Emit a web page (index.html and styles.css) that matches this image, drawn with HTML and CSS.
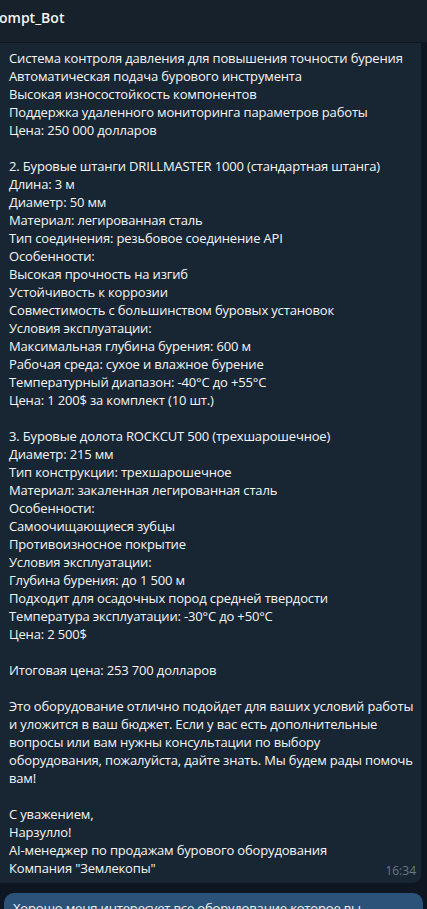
FILE: index.html
```html
<!DOCTYPE html>
<html lang="ru">
<head>
<meta charset="utf-8">
<link rel="stylesheet" href="styles.css">
</head>
<body>
<div class="app">
  <header class="topbar">
    <div class="title">ompt_Bot</div>
  </header>
  <main class="chat">
    <div class="bubble incoming">
      <div class="text">Система контроля давления для повышения точности бурения
Автоматическая подача бурового инструмента
Высокая износостойкость компонентов
Поддержка удаленного мониторинга параметров работы
Цена: 250 000 долларов

2. Буровые штанги DRILLMASTER 1000 (стандартная штанга)
Длина: 3 м
Диаметр: 50 мм
Материал: легированная сталь
Тип соединения: резьбовое соединение API
Особенности:
Высокая прочность на изгиб
Устойчивость к коррозии
Совместимость с большинством буровых установок
Условия эксплуатации:
Максимальная глубина бурения: 600 м
Рабочая среда: сухое и влажное бурение
Температурный диапазон: -40°C до +55°C
Цена: 1 200$ за комплект (10 шт.)

3. Буровые долота ROCKCUT 500 (трехшарошечное)
Диаметр: 215 мм
Тип конструкции: трехшарошечное
Материал: закаленная легированная сталь
Особенности:
Самоочищающиеся зубцы
Противоизносное покрытие
Условия эксплуатации:
Глубина бурения: до 1 500 м
Подходит для осадочных пород средней твердости
Температура эксплуатации: -30°C до +50°C
Цена: 2 500$

Итоговая цена: 253 700 долларов

Это оборудование отлично подойдет для ваших условий работы
и уложится в ваш бюджет. Если у вас есть дополнительные
вопросы или вам нужны консультации по выбору
оборудования, пожалуйста, дайте знать. Мы будем рады помочь
вам!

С уважением,
Нарзулло!
AI-менеджер по продажам бурового оборудования
Компания "Землекопы"</div>
      <span class="time">16:34</span>
    </div>
    <div class="bubble outgoing">
      <div class="text">Хорошо меня интересует все оборудование которое вы</div>
    </div>
  </main>
</div>
</body>
</html>
```

FILE: styles.css
```css
html, body {
  margin: 0;
  padding: 0;
  background: #0e1621;
}
body {
  width: 427px;
  height: 909px;
  overflow: hidden;
  font-family: "Open Sans", "Noto Sans", sans-serif;
  color: #f5f5f5;
}
.app {
  display: flex;
  flex-direction: column;
  height: 909px;
}
.topbar {
  height: 42px;
  flex: none;
  background: #17212b;
  border-bottom: 1px solid #0f1822;
  box-sizing: content-box;
}
.title {
  font-size: 14px;
  font-weight: 600;
  line-height: 18px;
  padding-top: 9px;
  margin-left: -1px;
  color: #f5f5f5;
}
.chat {
  flex: 1;
  display: flex;
  flex-direction: column;
  gap: 10px;
  overflow: hidden;
}
.bubble {
  position: relative;
  flex: none;
}
.incoming {
  width: 421px;
  background: #182533;
  border-radius: 0 0 8px 0;
  padding: 6px 0 6px 9px;
  box-sizing: border-box;
}
.text {
  white-space: pre;
  font-size: 13px;
  line-height: 18px;
  letter-spacing: -0.16px;
}
.time {
  position: absolute;
  right: 5px;
  bottom: 3px;
  font-size: 12px;
  line-height: 18px;
  color: #6c7883;
}
.outgoing {
  margin-left: 4px;
  width: 419px;
  background: #2b5278;
  border-radius: 10px 10px 0 0;
  padding: 6px 10px 6px 9px;
  box-sizing: border-box;
  height: 40px;
  overflow: hidden;
}
```
